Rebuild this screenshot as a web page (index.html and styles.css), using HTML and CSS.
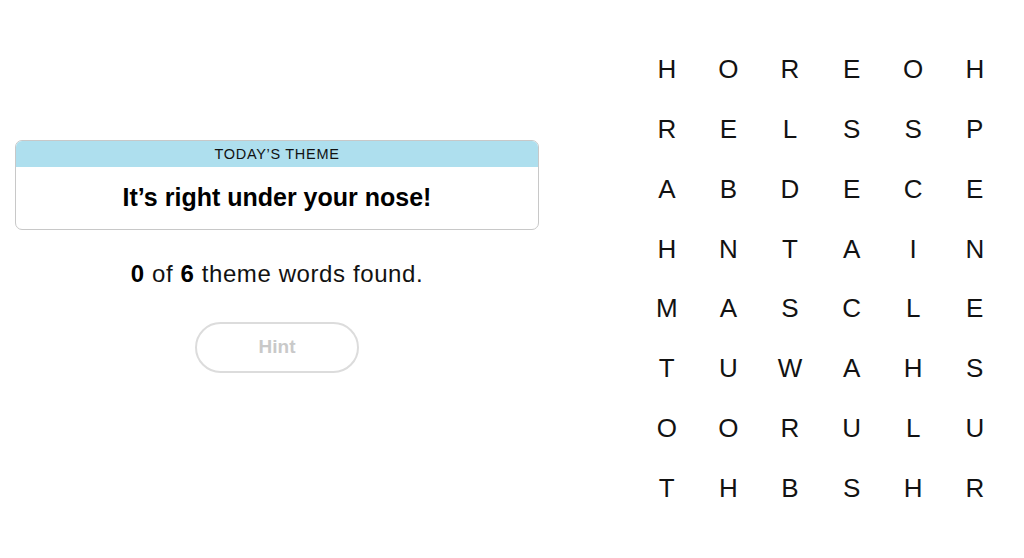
FILE: index.html
```html
<!DOCTYPE html>
<html>
<head>
<meta charset="utf-8">
<link rel="stylesheet" href="styles.css">
</head>
<body>
<main class="game">
  <section class="info">
    <div class="theme-card">
      <div class="theme-label">TODAY’S THEME</div>
      <div class="theme-title">It’s right under your nose!</div>
    </div>
    <p class="progress"><b>0</b> of <b>6</b> theme words found.</p>
    <button class="hint" disabled>Hint</button>
  </section>
  <section class="board">
    <span>H</span><span>O</span><span>R</span><span>E</span><span>O</span><span>H</span>
    <span>R</span><span>E</span><span>L</span><span>S</span><span>S</span><span>P</span>
    <span>A</span><span>B</span><span>D</span><span>E</span><span>C</span><span>E</span>
    <span>H</span><span>N</span><span>T</span><span>A</span><span>I</span><span>N</span>
    <span>M</span><span>A</span><span>S</span><span>C</span><span>L</span><span>E</span>
    <span>T</span><span>U</span><span>W</span><span>A</span><span>H</span><span>S</span>
    <span>O</span><span>O</span><span>R</span><span>U</span><span>L</span><span>U</span>
    <span>T</span><span>H</span><span>B</span><span>S</span><span>H</span><span>R</span>
  </section>
</main>
</body>
</html>
```

FILE: styles.css
```css
* { box-sizing: border-box; }
html, body {
  margin: 0;
  padding: 0;
  background: #fff;
  color: #000;
  font-family: "Liberation Sans", Arial, sans-serif;
}
.game {
  width: 1024px;
  height: 558px;
  display: flex;
  align-items: center;
  padding-left: 15px;
}
.info {
  width: 524px;
  padding-bottom: 46px;
  display: flex;
  flex-direction: column;
  align-items: center;
}
.theme-card {
  width: 100%;
  border: 1px solid #c8c8c8;
  border-radius: 7px;
  overflow: hidden;
}
.theme-label {
  background: #aedfee;
  height: 26px;
  display: flex;
  align-items: center;
  justify-content: center;
  font-size: 14.5px;
  letter-spacing: 0.7px;
  color: #121212;
}
.theme-title {
  height: 62px;
  display: flex;
  align-items: center;
  justify-content: center;
  font-weight: bold;
  font-size: 25px;
  color: #000;
}
.progress {
  margin: 30px 0 0;
  font-size: 24px;
  letter-spacing: 0.6px;
  line-height: 28px;
  color: #121212;
}
.progress b { font-weight: bold; color: #000; }
.hint {
  margin-top: 34px;
  width: 164px;
  height: 51px;
  border: 2px solid #dcdcdc;
  border-radius: 26px;
  background: #fff;
  color: #c9c9c9;
  font-family: "Liberation Sans", Arial, sans-serif;
  font-weight: bold;
  font-size: 19px;
}
.board {
  margin-left: 97px;
  display: grid;
  grid-template-columns: repeat(6, 61.6px);
  grid-auto-rows: 59.8px;
}
.board span {
  display: flex;
  align-items: center;
  justify-content: center;
  font-size: 26px;
  color: #121212;
}
```
